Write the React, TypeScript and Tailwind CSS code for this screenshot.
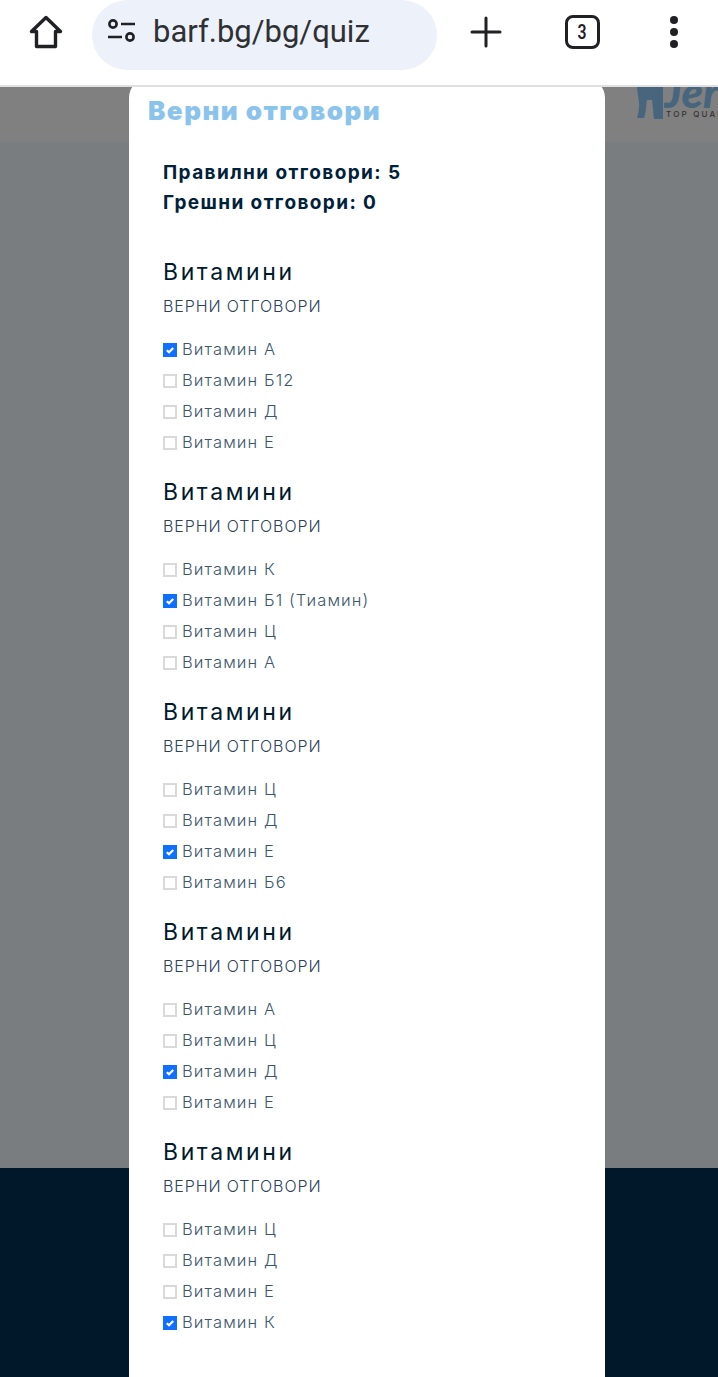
import React from "react";

const questions = [
    { options: ["Витамин А", "Витамин Б12", "Витамин Д", "Витамин Е"], correct: 0 },
    { options: ["Витамин К", "Витамин Б1 (Тиамин)", "Витамин Ц", "Витамин А"], correct: 1 },
    { options: ["Витамин Ц", "Витамин Д", "Витамин Е", "Витамин Б6"], correct: 2 },
    { options: ["Витамин А", "Витамин Ц", "Витамин Д", "Витамин Е"], correct: 2 },
    { options: ["Витамин Ц", "Витамин Д", "Витамин Е", "Витамин К"], correct: 3 },
];

const Checkbox = ({ checked }: { checked: boolean }) => {
    if (!checked) {
        return <span className="block h-[14px] w-[14px] shrink-0 border-2 border-[#d9d9d9] bg-white" />;
    }
    return (
        <span className="flex h-[14px] w-[14px] shrink-0 items-center justify-center bg-[#0f6fff]">
            <svg viewBox="0 0 14 14" width="14" height="14" fill="none" stroke="#fff" strokeWidth="2.2">
                <path d="M3.8 7.2l2.2 2.1 4.2-4.4" />
            </svg>
        </span>
    );
};

const Question = ({ options, correct }: { options: string[]; correct: number }) => {
    return (
        <div className="h-[220px]">
            <div className="h-[37px] text-[23px] leading-[26px] tracking-[2.6px] text-[#001a2c]">Витамини</div>
            <div className="h-[38px] text-[16px] leading-[20px] font-light tracking-[0.9px] text-[#2c4358]">
                ВЕРНИ ОТГОВОРИ
            </div>
            <ul className="flex flex-col">
                {options.map((o, i) => (
                    <li key={`${o}-${i}`} className="flex h-[31px] items-center gap-[5px]">
                        <Checkbox checked={i === correct} />
                        <span className="mt-[-2px] text-[16.5px] leading-[20px] font-light tracking-[1.1px] text-[#3c566c]">{o}</span>
                    </li>
                ))}
            </ul>
        </div>
    );
};

export default function App() {
    return (
        <div lang="bg" className="relative h-[1377px] w-[718px] overflow-hidden bg-white font-['Inter','Noto_Sans',sans-serif]">
            <div className="relative z-10">
                <header className="flex h-[85px] items-start bg-white">
                    <div className="flex h-[64px] w-[92px] items-center justify-center">
                        <svg viewBox="0 0 36 36" width="36" height="36" fill="none" stroke="#202124" strokeWidth="3.4" strokeLinejoin="round">
                            <path d="M18 3.5 3.5 17.5H8.5V32.5H27.5V17.5H32.5Z" />
                        </svg>
                    </div>
                    <div className="flex h-[70px] w-[345px] items-center rounded-[35px] bg-[#edf1fa] pl-[15px]">
                        <svg viewBox="0 0 30 24" width="30" height="24" fill="none" stroke="#202124" strokeWidth="2.6" className="mt-[-8px]">
                            <circle cx="6" cy="5" r="3.6" />
                            <path d="M14 5H28M1 18H15" />
                            <circle cx="23" cy="18" r="3.6" />
                        </svg>
                        <span className="ml-[16px] mt-[-6px] font-['Roboto',sans-serif] text-[31px] leading-[40px] text-[#2f3033]">
                            barf.bg/bg/quiz
                        </span>
                    </div>
                    <div className="flex h-[64px] w-[98px] items-center justify-center">
                        <svg viewBox="0 0 32 32" width="32" height="32" fill="none" stroke="#202124" strokeWidth="3" strokeLinecap="round">
                            <path d="M16 2V30M2 16H30" />
                        </svg>
                    </div>
                    <div className="flex h-[64px] w-[94px] items-center justify-center">
                        <span className="flex h-[34px] w-[35px] items-center justify-center rounded-[8px] border-[3.5px] border-[#202124] font-['Roboto',sans-serif] text-[21px] leading-none font-semibold text-[#202124]">
                            <span className="block scale-x-75">3</span>
                        </span>
                    </div>
                    <div className="flex h-[64px] flex-1 flex-col items-center justify-center gap-[4px]">
                        <span className="h-[8px] w-[8px] rounded-full bg-[#202124]" />
                        <span className="h-[8px] w-[8px] rounded-full bg-[#202124]" />
                        <span className="h-[8px] w-[8px] rounded-full bg-[#202124]" />
                    </div>
                </header>
                <div className="h-[2px] bg-[#e0e0e0]" />
            </div>
            <div className="flex h-[55px] justify-end overflow-hidden bg-[#808080]">
                <div className="flex h-[34px] w-[82px] shrink-0 text-[#47667e]">
                    <svg viewBox="0 0 28 34" width="28" height="34" className="shrink-0" fill="#47667e">
                        <path d="M1 0H27V32H18C17 26 17 20 16 13H11C10 20 10 26 8 31H1C3 24 4 18 2 9Z" />
                    </svg>
                    <div className="flex w-[54px] flex-col overflow-hidden">
                        <span className="mt-[-17px] h-[40px] font-['Lato',sans-serif] text-[44px] leading-[42px] font-black italic">Jer</span>
                        <span className="pl-[2px] text-[8px] leading-[8px] font-medium tracking-[2.2px] whitespace-nowrap text-[#333]">
                            TOP QUALITY
                        </span>
                    </div>
                </div>
            </div>
            <div className="h-[1026px] bg-[#797d80]" />
            <div className="h-[209px] bg-[#001829]" />

            <div className="absolute top-[78px] left-[129px] h-[1310px] w-[476px] rounded-t-[20px] bg-white">
                <h2 className="h-[80px] pt-[18px] pl-[19px] text-[26px] leading-[30px] font-black tracking-[1.5px] text-[#8ac3ec]">
                    Верни отговори
                </h2>
                <div className="px-[34px]">
                    <div className="h-[101px] text-[19px] leading-[30px] font-bold tracking-[1.4px] text-[#00213a]">
                        <p>Правилни отговори: 5</p>
                        <p>Грешни отговори: 0</p>
                    </div>
                    {questions.map((q, i) => (
                        <Question key={i} options={q.options} correct={q.correct} />
                    ))}
                </div>
            </div>
        </div>
    );
}
